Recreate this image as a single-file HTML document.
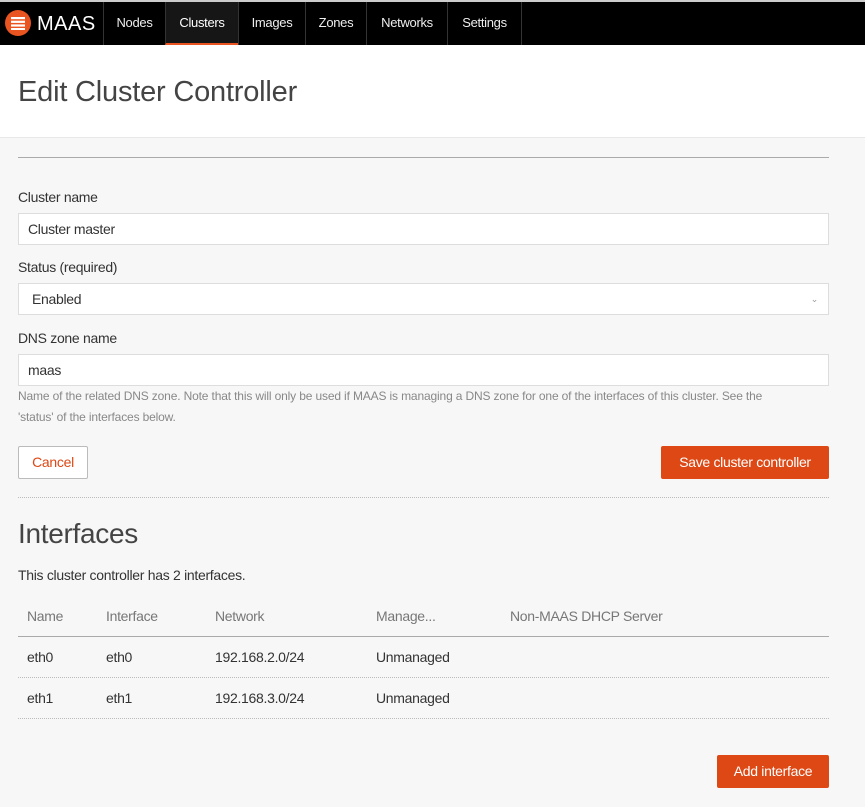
<!DOCTYPE html>
<html><head><style>
*{box-sizing:border-box;margin:0;padding:0}
body{width:865px;height:807px;background:#f7f7f7;font-family:"Liberation Sans",sans-serif;color:#333;position:relative;overflow:hidden;font-size:14px;letter-spacing:-0.3px}
.abs{position:absolute}
.nav{left:0;top:2px;width:865px;height:43px;background:#000;border-top:0}
.top{left:0;top:0;width:865px;height:2px;background:#ccc}
.nav a{position:absolute;top:0;height:43px;line-height:42px;color:#eee;font-size:13px;text-align:center;border-left:1px solid #333}
.hdr{left:0;top:45px;width:865px;height:93px;background:#fff;border-bottom:1px solid #e8e8e8}
.lbl{left:18px;font-size:14px;color:#333}
.inp{left:18px;width:811px;height:32px;background:#fff;border:1px solid #ddd;font-size:14px;line-height:30px;padding-left:9px}
.btn{height:33px;line-height:31px;font-size:14px;text-align:center;border-radius:2px}
.or{background:#dd4814;color:#fff;border:1px solid #dd4814}
.th{top:608px;font-size:14px;color:#777}
.td{font-size:14px;color:#333}
</style></head><body>
<div class="abs top"></div>
<div class="abs nav">
 <svg class="abs" style="left:5px;top:8px" width="26" height="26" viewBox="0 0 26 26"><circle cx="13" cy="13" r="13" fill="#e95420"/><g fill="#fff"><rect x="6" y="7" width="14" height="2.2"/><rect x="6" y="10.7" width="14" height="2.2"/><rect x="6" y="14.4" width="14" height="2.2"/><rect x="6" y="18" width="14" height="2"/></g></svg>
 <div class="abs" style="left:37px;top:11px;color:#fff;font-size:20px;letter-spacing:0.5px">MAAS</div>
 <a style="left:103px;width:62px">Nodes</a>
 <a style="left:165px;width:73px;background:#161616;border-bottom:2px solid #e95420;color:#fff">Clusters</a>
 <a style="left:238px;width:67px">Images</a>
 <a style="left:305px;width:61px">Zones</a>
 <a style="left:366px;width:81px">Networks</a>
 <a style="left:447px;width:74px">Settings</a>
 <a style="left:521px;width:1px"></a>
</div>
<div class="abs hdr"></div>
<div class="abs" style="left:18px;top:76px;font-size:29px;color:#444;font-weight:300;letter-spacing:-0.2px">Edit Cluster Controller</div>
<div class="abs" style="left:18px;top:157px;width:811px;height:1px;background:#aaa"></div>
<div class="abs lbl" style="top:189px">Cluster name</div>
<div class="abs inp" style="top:213px">Cluster master</div>
<div class="abs lbl" style="top:259px">Status (required)</div>
<div class="abs inp" style="top:283px;padding-left:13px">Enabled<span class="abs" style="right:10px;top:0;font-size:9px;color:#999">&#8964;</span></div>
<div class="abs lbl" style="top:330px">DNS zone name</div>
<div class="abs inp" style="top:354px">maas</div>
<div class="abs" style="left:18px;top:386px;width:765px;font-size:12px;line-height:21px;color:#888;letter-spacing:-0.15px">Name of the related DNS zone. Note that this will only be used if MAAS is managing a DNS zone for one of the interfaces of this cluster. See the 'status' of the interfaces below.</div>
<div class="abs btn" style="left:18px;top:446px;width:70px;border:1px solid #bbb;background:#fff;color:#dd4814">Cancel</div>
<div class="abs btn or" style="left:661px;top:446px;width:168px">Save cluster controller</div>
<div class="abs" style="left:18px;top:497px;width:811px;border-top:1px dotted #bbb"></div>
<div class="abs" style="left:18px;top:518px;font-size:28px;font-weight:300;color:#444">Interfaces</div>
<div class="abs" style="left:18px;top:567px;font-size:14px">This cluster controller has 2 interfaces.</div>
<div class="abs th" style="left:27px">Name</div>
<div class="abs th" style="left:106px">Interface</div>
<div class="abs th" style="left:215px">Network</div>
<div class="abs th" style="left:376px">Manage...</div>
<div class="abs th" style="left:510px">Non-MAAS DHCP Server</div>
<div class="abs" style="left:18px;top:636px;width:811px;height:1px;background:#aaa"></div>
<div class="abs td" style="left:27px;top:649px">eth0</div>
<div class="abs td" style="left:106px;top:649px">eth0</div>
<div class="abs td" style="left:215px;top:649px">192.168.2.0/24</div>
<div class="abs td" style="left:376px;top:649px">Unmanaged</div>
<div class="abs" style="left:18px;top:677px;width:811px;border-top:1px dotted #bbb"></div>
<div class="abs td" style="left:27px;top:690px">eth1</div>
<div class="abs td" style="left:106px;top:690px">eth1</div>
<div class="abs td" style="left:215px;top:690px">192.168.3.0/24</div>
<div class="abs td" style="left:376px;top:690px">Unmanaged</div>
<div class="abs" style="left:18px;top:718px;width:811px;border-top:1px dotted #bbb"></div>
<div class="abs btn or" style="left:717px;top:755px;width:112px">Add interface</div>
</body></html>
